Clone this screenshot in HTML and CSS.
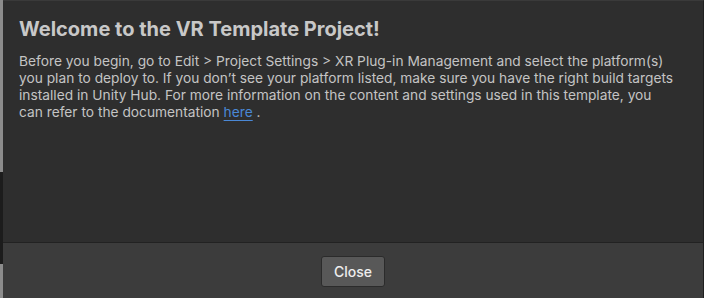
FILE: index.html
```html
<!DOCTYPE html>
<html>
<head>
    <meta charset="UTF-8">
    <title>Welcome to the VR Template Project!</title>
    <link rel="stylesheet" href="styles.css">
</head>
<body>
    <div class="window">
        <div class="behind">
            <div class="behind__light"></div>
            <div class="behind__dark"></div>
            <div class="behind__light"></div>
        </div>
        <div class="dialog">
            <div class="dialog__content">
                <h1 class="dialog__title">Welcome to the VR Template Project!</h1>
                <p class="dialog__text">
                    Before you begin, go to Edit &gt; Project Settings &gt; XR Plug-in Management and select the platform(s)<br>
                    you plan to deploy to. If you don’t see your platform listed, make sure you have the right build targets<br>
                    installed in Unity Hub. For more information on the content and settings used in this template, you<br>
                    can refer to the documentation <a class="dialog__link" href="#">here</a>&nbsp;.
                </p>
            </div>
            <div class="dialog__footer">
                <button class="btn">Close</button>
            </div>
        </div>
    </div>
</body>
</html>
```
FILE: styles.css
```css
*, *::before, *::after {
    box-sizing: border-box;
}
body {
    margin: 0;
    background-color: #1e1e1e;
    font-family: 'Inter', 'Liberation Sans', sans-serif;
}
.window {
    display: flex;
    width: 704px;
    height: 298px;
}
.behind {
    width: 3px;
    display: flex;
    flex-direction: column;
}
.behind__light {
    background-color: #8c8c8c;
    height: 172px;
}
.behind__dark {
    background-color: #1c1c1c;
    height: 92px;
}
.behind__light:last-child {
    flex: 1;
    height: auto;
}
.dialog {
    flex: 1;
    display: flex;
    flex-direction: column;
    background-color: #2e2e2e;
    border-top: 1px solid #3a3a3a;
    border-right: 1px solid #1f1f1f;
}
.dialog__content {
    flex: 1;
    padding: 15px 16px 0 16px;
}
.dialog__title {
    margin: 0 0 11px 0;
    font-size: 20px;
    font-weight: 700;
    line-height: 26px;
    color: #c8c8c8;
}
.dialog__text {
    margin: 0;
    font-size: 13.75px;
    line-height: 17px;
    color: #c4c4c4;
    white-space: nowrap;
}
.dialog__link {
    color: #4a88d6;
    text-decoration: underline;
    text-underline-offset: 3px;
}
.dialog__footer {
    height: 56px;
    background-color: #3c3c3c;
    border-top: 1px solid #222222;
    display: flex;
    align-items: center;
    justify-content: center;
}
.btn {
    width: 64px;
    height: 31px;
    background-color: #585858;
    border: 1px solid #2b2b2b;
    border-radius: 3px;
    color: #eeeeee;
    font-family: 'Inter', 'Liberation Sans', sans-serif;
    font-size: 14px;
    font-weight: 500;
    margin-top: 1px;
}
```
